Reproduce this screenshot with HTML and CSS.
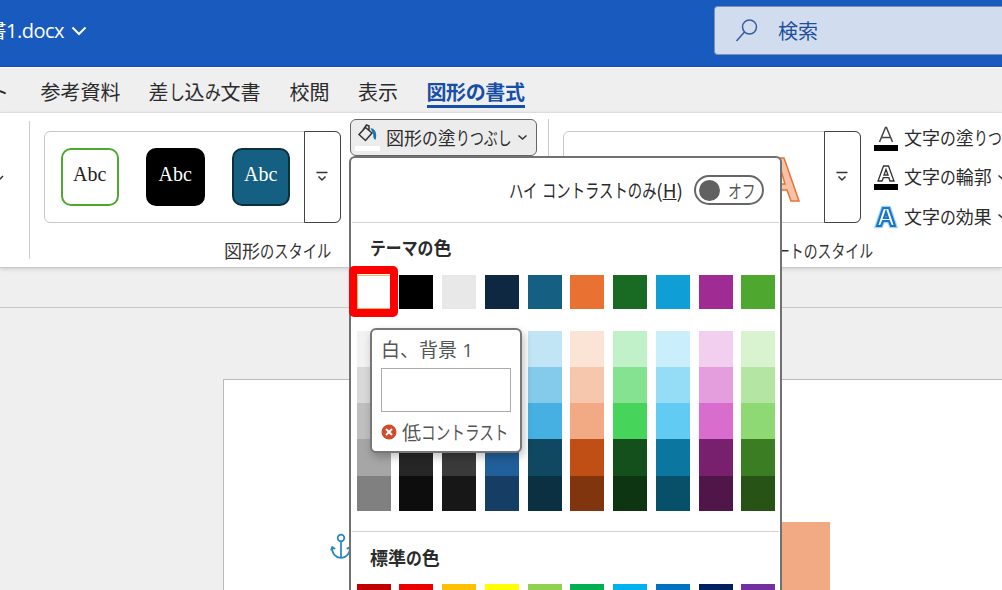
FILE: index.html
```html
<!DOCTYPE html>
<html lang="ja">
<head>
<meta charset="utf-8">
<title>文書1.docx</title>
<link rel="stylesheet" href="styles.css">
</head>
<body>
<div class="app">
  <header class="titlebar">
    <div class="filename"><span>書</span>1.docx</div>
    <svg class="file-chevron" width="16" height="10" viewBox="0 0 16 10"><path d="M1.500 1.500 8 8 14.500 1.500"/></svg>
    <div class="search">
      <svg width="24" height="26" viewBox="0 0 24 26"><circle cx="14.500" cy="9" r="7"/><path d="M9.500 14 1.500 23"/></svg>
      <span>検索</span>
    </div>
  </header>
  <nav class="tabs">
    <span class="tab tab-cut">ト</span>
    <span class="tab tab-ref">参考資料</span>
    <span class="tab tab-mail">差<span class="kana n1">し</span>込<span class="kana n1">み</span>文書</span>
    <span class="tab tab-review">校閲</span>
    <span class="tab tab-view">表示</span>
    <span class="tab tab-format">図形の書式</span>
  </nav>
  <section class="ribbon">
    <div class="left-group"><svg width="8" height="8" viewBox="0 0 8 8"><path d="M-3 1 0 5 3 2"/></svg></div>
    <div class="shape-group">
      <div class="gallery">
        <span class="style-box outline">Abc</span>
        <span class="style-box black">Abc</span>
        <span class="style-box teal">Abc</span>
        <span class="more"><svg width="12" height="12" viewBox="0 0 12 12"><path d="M.5 1.500h11M2.500 5.500 6 9l3.500-3.500"/></svg></span>
      </div>
      <div class="caption">図形<span class="kana n5">のスタイル</span></div>
    </div>
    <div class="fill-group">
      <div class="fill-button">
        <span class="bucket"><svg width="24" height="20" viewBox="0 0 24 20"><path class="ink" d="M4 10.500 10.500 3.500l6.500 5.500-6.500 7.500zM8 6 11.500 1 14 2v4.500"/><path class="drop" d="M15.500 4c5 .5 7 6 5 12-2-1-2.500-3-2.200-5.500z"/></svg></span>
        <span class="fill-label">図形<span class="kana n1 no">の</span>塗<span class="kana n4">りつぶし</span></span>
        <svg width="11" height="7" viewBox="0 0 11 7"><path d="M1.500 1.500 5.500 5l4-3.500"/></svg>
      </div>
    </div>
    <div class="art-group">
      <div class="art-gallery">
        <svg class="art-letter" width="42" height="48" viewBox="0 0 42 48"><path d="M17 2h8l15 43h-8l-4-11H14l-4 11H2zm4 9-5 17h10z"/></svg>
        <span class="more"><svg width="12" height="12" viewBox="0 0 12 12"><path d="M.5 1.500h11M2.500 5.500 6 9l3.500-3.500"/></svg></span>
      </div>
      <div class="caption"><span class="kana n7">ートのスタイル</span></div>
    </div>
    <div class="text-tools">
      <div class="tool"><svg width="26" height="26" viewBox="0 0 26 26"><path class="ink" d="M6.500 17 12.500 2.500h1L19.500 17M8.500 12.500h9"/><path class="bar" d="M1 20h24v6H1z"/></svg><span>文字<span class="kana n1 no">の</span>塗<span class="kana n4">りつぶし</span></span></div>
      <div class="tool"><svg width="26" height="26" viewBox="0 0 26 26"><path class="hollow" d="M10.500 2h5L21 17h-4l-1.200-3.300h-5.500L9 17H5zm2.500 3.500-2 5.500h4z"/><path class="bar" d="M1 20h24v6H1z"/></svg><span>文字<span class="kana n1 no">の</span>輪郭</span><svg class="tiny" width="11" height="7" viewBox="0 0 11 7"><path d="M1.500 1.500 5.500 5l4-3.500"/></svg></div>
      <div class="tool"><svg width="26" height="26" viewBox="0 0 26 26"><path class="halo" d="M10 4h6l6 18h-4l-2-5h-6l-2 5H4zm3 4-2 6h4z"/><path class="glow" d="M10 4h6l6 18h-4l-2-5h-6l-2 5H4zm3 4-2 6h4z"/></svg><span>文字<span class="kana n1 no">の</span>効果</span><svg class="tiny" width="11" height="7" viewBox="0 0 11 7"><path d="M1.500 1.500 5.500 5l4-3.500"/></svg></div>
    </div>
  </section>
  <main class="canvas">
    <div class="ruler"></div>
    <div class="page">
      <svg class="anchor" width="22" height="28" viewBox="0 0 22 28"><circle cx="11" cy="5" r="3.300"/><path d="M11 8.300V25M2 14c0 7 4 10.500 9 11 5-.5 9-4 9-11M1 17.500 2.200 14l3 2M21 17.500 19.800 14l-3 2"/></svg>
      <div class="shape"></div>
    </div>
  </main>

  <div class="menu">
    <div class="contrast"><span class="contrast-label"><span class="kana n2">ハイ</span><span class="kana n8">コントラストのみ</span>(<u>H</u>)</span>
      <span class="toggle"><i></i><span class="kana n2">オフ</span></span></div>
    <h2 class="theme-title"><span class="kana n4">テーマの</span>色</h2>
    <div class="swatches base">
      <i class="c-white"></i><i class="c-black"></i><i class="c-gray"></i><i class="c-navy"></i><i class="c-teal"></i><i class="c-orange"></i><i class="c-green"></i><i class="c-blue"></i><i class="c-purple"></i><i class="c-lime"></i>
    </div>
    <div class="swatches shades">
      <i class="s-white"></i><i class="s-black"></i><i class="s-gray"></i><i class="s-navy"></i><i class="s-teal"></i><i class="s-orange"></i><i class="s-green"></i><i class="s-blue"></i><i class="s-purple"></i><i class="s-lime"></i>
    </div>
    <h2 class="standard-title">標準<span class="kana n1">の</span>色</h2>
    <div class="swatches standard">
      <i class="d-darkred"></i><i class="d-red"></i><i class="d-amber"></i><i class="d-yellow"></i><i class="d-light"></i><i class="d-green"></i><i class="d-sky"></i><i class="d-blue"></i><i class="d-navy"></i><i class="d-purple"></i>
    </div>
    <div class="highlight"></div>
    <div class="tooltip">
      <div class="tip-name">白、背景 <span class="tip-number">1</span></div>
      <div class="preview"></div>
      <div class="warning"><svg width="16" height="16" viewBox="0 0 16 16"><circle cx="8" cy="8" r="7.500"/><path d="m5 5 6 6m0-6-6 6"/></svg><span>低<span class="kana n6">コントラスト</span></span></div>
    </div>
  </div>
</div>
</body>
</html>
```
FILE: styles.css
```css
* { box-sizing: border-box; }
body { margin: 0; }
svg { display: block; flex: none; fill: none; stroke: #333; stroke-width: 1.5; }
.app {
  position: relative; width: 1002px; height: 590px; overflow: hidden;
  display: grid; grid-template-columns: 1002px; grid-template-rows: 67px 46px 155px 322px;
  background: #efefef; color: #2b2b2b;
  font: 18px/24px "Noto Sans CJK JP", sans-serif;
  white-space: nowrap;
}

/* Condensed kana: --n glyphs drawn at --s of their full width */
.kana { --s: .77; display: inline-block; transform: scaleX(var(--s)); transform-origin: left; margin-right: calc(var(--n) * (var(--s) - 1) * 1em); }
.n1 { --n: 1; } .n2 { --n: 2; } .n4 { --n: 4; } .n5 { --n: 5; }
.n6 { --n: 6; } .n7 { --n: 7; } .n8 { --n: 8; }

.titlebar { display: flex; align-items: center; background: #185abd; border-bottom: 1px solid #104da8; color: #fff; }
.filename { width: 64px; display: flex; justify-content: flex-end; font: 20px/24px "Open Sans", "Noto Sans CJK JP", sans-serif; letter-spacing: -.5px; padding-bottom: 4px; }
.file-chevron { margin: 0 0 4px 7px; stroke: #fff; stroke-width: 2; }
.search { flex: none; margin: 0 0 5px auto; width: 288px; height: 49px; display: flex; align-items: center; gap: 19px; padding-left: 20px; background: #d1ddef; border: 1px solid #8191ab; border-right: 0; border-radius: 4px 0 0 4px; color: #1d4f9d; font-size: 20px; }
.search svg { stroke: #335d9f; }

.tabs { display: flex; align-items: flex-start; padding-top: 12px; border-top: 1px solid #fff; border-bottom: 1px solid #e3e3e3; font-size: 20px; line-height: 24px; }
.tab { flex: none; }
.tab .kana { --s: .8; }
.tab-cut { width: 41px; margin-left: -11px; }
.tab-ref { width: 108px; margin-left: 10.500px; }
.tab-mail { width: 141px; }
.tab-review { width: 68.500px; }
.tab-view { width: 68.500px; }
.tab-format { height: 28px; color: #174ea6; font-weight: 700; letter-spacing: -.4px; border-bottom: 3px solid #174ea6; }

.ribbon { display: flex; background: #fff; border-bottom: 1px solid #c9c9c9; box-shadow: 0 1px 4px #ccc; z-index: 1; }
.ribbon > div { flex: none; }
.left-group { width: 30px; height: 138px; margin-top: 8px; padding-top: 53px; border-right: 1px solid #ccc; }
.shape-group { width: 312px; padding: 18px 0 0 14px; }
.gallery { width: 297px; height: 92px; display: flex; align-items: center; padding-left: 15.500px; gap: 27px; border: 1px solid #c8c8c8; border-radius: 6px; }
.style-box { flex: none; width: 58.500px; height: 58px; border: 2px solid #4ea72e; border-radius: 10px; font: 20px/48px "Liberation Serif", serif; text-align: center; color: #222; }
.style-box.black { background: #000; border-color: #000; color: #fff; }
.style-box.teal { background: #156082; border-color: #08303f; color: #fff; margin-right: -27px; }
.more { align-self: stretch; margin: -1px -1px -1px auto; width: 37px; flex: none; border: 1px solid #444; border-radius: 0 6px 6px 0; display: grid; place-items: center; padding-right: 2px; }
.caption { text-align: right; padding: 15px 11px 0 0; color: #333; }
.shape-group .caption .kana { --s: .79; }
.fill-group { width: 207px; height: 138px; padding-left: 8px; margin-top: 6px; border-right: 1px solid #ccc; }
.fill-button { width: 187px; height: 37px; display: flex; align-items: center; gap: 6px; padding: 0 0 1px 4px; background: #ececec; border: 1.500px solid #666; border-radius: 6px; }
.bucket { width: 25px; height: 27px; border-bottom: 5px solid #fff; }
.bucket .drop { fill: #1b73ad; stroke: none; }
.kana.no { --s: .88; }
.art-group { width: 311px; padding: 18px 0 0 14px; }
.art-gallery { width: 298px; height: 92px; display: flex; border: 1px solid #c8c8c8; border-radius: 6px; }
.art-letter { margin: 24px 0 0 195px; fill: #f6c3aa; stroke: #e97132; }
.art-group .caption { padding-right: 0; text-align: left; padding-left: 213px; }
.text-tools { padding: 5px 0 0 13px; display: flex; flex-direction: column; }
.tool { height: 39.500px; display: flex; align-items: center; gap: 5px; }
.tool > span { padding-bottom: 2px; }
.tool .ink { stroke: #444; }
.tool .hollow { stroke-width: 1.300; }
.tool .bar { fill: #000; stroke: none; }
.tool .halo { stroke: #a8d2f5; stroke-width: 4.500; }
.tool .glow { fill: #fff; stroke: #1677c8; stroke-width: 2.200; }

.canvas { display: flex; flex-direction: column; min-height: 0; }
.ruler { flex: none; height: 40px; border-bottom: 1px solid #c8c8c8; }
.page { flex: 1; min-height: 0; overflow: hidden; margin: 71px 0 0 223px; background: #fff; border: solid #bbb; border-width: 1px 0 0 1px; display: flex; align-items: flex-start; }
.anchor { margin: 153px 0 0 106px; stroke: #2585c7; stroke-width: 1.700; }
.shape { width: 76px; height: 80px; margin: 142px 0 0 402px; background: #f2aa84; }

.menu { position: absolute; z-index: 2; left: 349px; top: 156px; width: 433px; height: 440px; background: #fff; border: 2px solid #717171; border-radius: 6px 6px 0 0; }
.contrast { height: 65px; margin: 0 1px; border-bottom: 1.500px solid #d2d2d2; display: flex; justify-content: flex-end; align-items: center; gap: 11px; padding-right: 15px; }
.contrast-label { font-size: 19px; }
.contrast-label .n2 { margin-right: calc(-.46em + 4px); }
.contrast-label .kana { --s: .755; }
.toggle { width: 70px; height: 30px; border: 2px solid #666; border-radius: 15px; display: flex; align-items: center; gap: 8px; padding-left: 3px; color: #555; }
.toggle i { width: 21px; height: 21px; border-radius: 50%; background: #616161; }
h2 { margin: 0; font-size: 18px; line-height: 24px; font-weight: 700; padding-left: 19px; }
h2 .kana { --s: .88; }
.theme-title { padding-top: 12px; }
.swatches { display: grid; grid-template-columns: repeat(10, 34px); column-gap: 8.750px; margin-left: 5.500px; }
.base { margin-top: 16px; height: 34px; }
.shades { margin-top: 22px; height: 180px; }
.shades i { background: linear-gradient(var(--a) 20%, var(--b) 20% 40%, var(--c) 40% 60%, var(--d) 60% 80.500%, var(--e) 80.500%); }
.standard { height: 34px; margin-top: 15px; }
.standard-title { margin: 20px 1px 0; padding-top: 13px; padding-left: 18px; border-top: 1.500px solid #d2d2d2; }
.c-white { background: #fff; border: 1px solid #ffb45b; }
.c-black { background: #000; } .c-gray { background: #e8e8e8; }
.c-navy { background: #0e2841; } .c-teal { background: #156082; }
.c-orange { background: #e97132; } .c-green { background: #196b24; }
.c-blue { background: #0f9ed5; } .c-purple { background: #a02b93; }
.c-lime { background: #4ea72e; }
.s-white { --a:#f2f2f2; --b:#d9d9d9; --c:#bfbfbf; --d:#a6a6a6; --e:#808080; }
.s-black { --a:#808080; --b:#595959; --c:#404040; --d:#262626; --e:#0d0d0d; }
.s-gray { --a:#d1d1d1; --b:#aeaeae; --c:#757575; --d:#3a3a3a; --e:#171717; }
.s-navy { --a:#dceaf7; --b:#a6caec; --c:#4e95d9; --d:#215f9a; --e:#163e64; }
.s-teal { --a:#c1e5f5; --b:#83caeb; --c:#45b0e1; --d:#104862; --e:#0b3041; }
.s-orange { --a:#fbe3d6; --b:#f6c6ad; --c:#f2aa84; --d:#c04f15; --e:#80350e; }
.s-green { --a:#c1f1c8; --b:#84e291; --c:#47d45a; --d:#13501b; --e:#0d3512; }
.s-blue { --a:#caeefb; --b:#95dcf7; --c:#61cbf4; --d:#0b769f; --e:#084f6a; }
.s-purple { --a:#f2cfee; --b:#e59edd; --c:#d86dcd; --d:#78206e; --e:#501549; }
.s-lime { --a:#d9f2d0; --b:#b4e5a2; --c:#8ed973; --d:#3b7d23; --e:#275317; }
.d-darkred { background: #c00000; } .d-red { background: #e90000; }
.d-amber { background: #ffc000; } .d-yellow { background: #ff0; }
.d-light { background: #92d050; } .d-green { background: #00b050; }
.d-sky { background: #00b0f0; } .d-blue { background: #0070c0; }
.d-navy { background: #002060; } .d-purple { background: #7030a0; }
.highlight { position: absolute; left: -2px; top: 108px; width: 49px; height: 51px; border: 8px solid #f00; border-radius: 5px; }
.tooltip { position: absolute; left: 19px; top: 170px; width: 152px; height: 125px; background: #fff; border: 2px solid #777; border-radius: 6px; padding: 8px 9px; color: #555; box-shadow: 2px 4px 8px rgba(0,0,0,.25); }
.tip-name { font-size: 19px; height: 24px; margin-top: -1px; }
.tip-number { font-family: "Open Sans", sans-serif; line-height: 1; margin-left: 1px; }
.preview { width: 130px; height: 44px; margin-top: 7px; border: 1px solid #aaa; }
.warning { display: flex; align-items: center; gap: 5px; margin-top: 8px; font-size: 19px; }
.warning svg { fill: #d04b2c; stroke: none; }
.warning path { stroke: #fff; stroke-width: 2; }
```
